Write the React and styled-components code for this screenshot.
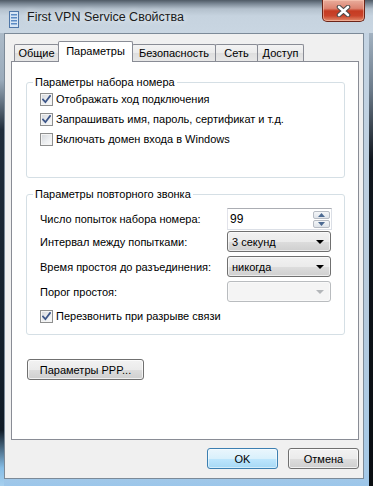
import React from "react"
import styled, { createGlobalStyle } from "styled-components"

const GlobalStyle = createGlobalStyle`
  html, body {
    margin: 0;
    padding: 0;
    width: 373px;
    height: 486px;
    overflow: hidden;
    background: #1b2633;
  }
  body {
    font-family: "Liberation Sans", Arial, sans-serif;
    font-size: 11px;
    color: #000;
  }
`

const Window = styled.div`
  width: 373px;
  height: 486px;
  box-sizing: border-box;
  display: flex;
  flex-direction: column;
  padding: 0 9px 7px 4px;
  background:
    linear-gradient(to bottom, #b9c6d2 0, #9aabbb 80px, #1f2c3a 130px, #0f1a25 430px, #86bde6 468px, #a8d0ee 486px) left top / 4px 100% no-repeat,
    linear-gradient(to bottom, #c2d2e1 0, #6b7a89 90px, #10161d 160px, #0a0e12 486px) right top / 4px 100% no-repeat,
    linear-gradient(to bottom, #bccbd9 0, #c4d4e3 40px, #b6cadc 300px, #a6c9e6 470px, #9cc6ea 486px);
`

const TitleBar = styled.div`
  height: 33px;
  flex: none;
  display: flex;
  align-items: flex-start;
  margin: 0 -9px 0 -4px;
  padding: 0 8px 0 9px;
  background: linear-gradient(to bottom, #4f5a65 0, #7d8a97 4px, #b4c1cd 9px, #c6d3df 16px, #c9d6e2 33px);
`

const TitleIcon = styled.svg`
  margin-top: 11px;
  flex: none;
`

const TitleText = styled.div`
  margin: 10px 0 0 8px;
  font-size: 12.5px;
  line-height: 15px;
  color: #1a1a1a;
  text-shadow: 0 0 6px rgba(255, 255, 255, 0.9);
  flex: 1;
`

const CloseButton = styled.div`
  width: 43px;
  height: 22px;
  box-sizing: border-box;
  border: 1px solid #6b2418;
  border-top: none;
  border-radius: 0 0 5px 5px;
  background: linear-gradient(to bottom, #e9ad9c 0%, #dc8370 40%, #c53b22 52%, #c9432a 75%, #e28c6d 100%);
  box-shadow: inset 0 0 0 1px rgba(255, 210, 190, 0.5);
  display: flex;
  align-items: center;
  justify-content: center;
`

const Client = styled.div`
  flex: 1;
  display: flex;
  flex-direction: column;
  background: #f0f0f0;
  border: 1px solid #7c8a98;
  padding: 7px 4px 9px 6px;
  min-height: 0;
`

const TabStrip = styled.div`
  display: flex;
  align-items: flex-end;
  height: 20px;
  padding-left: 3px;
  flex: none;
`

const Tab = styled.div`
  box-sizing: border-box;
  width: ${p => p.w}px;
  height: ${p => (p.active ? 21 : 17)}px;
  margin-bottom: ${p => (p.active ? -1 : 0)}px;
  margin-left: ${p => (p.first ? 0 : -1)}px;
  position: relative;
  z-index: ${p => (p.active ? 2 : 1)};
  border: 1px solid #898c95;
  border-bottom: none;
  border-radius: 2px 2px 0 0;
  background: ${p => (p.active ? "#fff" : "linear-gradient(to bottom, #f3f3f3 0%, #ebebeb 50%, #dedede 51%, #e7e7e7 100%)")};
  text-align: center;
  line-height: ${p => (p.active ? 18 : 16)}px;
  white-space: nowrap;
`

const Panel = styled.div`
  flex: 1;
  display: flex;
  flex-direction: column;
  align-items: flex-start;
  background: #fff;
  border: 1px solid #898c95;
  padding: 0 13px 0 14px;
  min-height: 0;
`

const Group = styled.fieldset`
  align-self: stretch;
  margin: ${p => p.top}px 0 0 0;
  padding: ${p => p.padTop}px 6px ${p => p.padBottom}px 6px;
  border: 1px solid #d5dfe5;
  border-radius: 3px;
  min-width: 0;
`

const Legend = styled.legend`
  padding: 0 2px;
  line-height: 14px;
`

const CheckRow = styled.label`
  display: flex;
  align-items: center;
  height: 20px;
  padding-left: 7px;
  white-space: nowrap;
`

const Box = styled.span`
  width: 13px;
  height: 13px;
  box-sizing: border-box;
  border: 1px solid #8e8f8f;
  background: linear-gradient(135deg, #d3d6da 0%, #eef0f2 60%, #fbfbfb 100%);
  box-shadow: inset 0 0 0 1px #f4f4f4;
  margin-right: 3px;
  flex: none;
  display: flex;
  align-items: center;
  justify-content: center;
`

const FieldRow = styled.div`
  display: flex;
  align-items: center;
  height: ${p => p.h}px;
  margin-top: ${p => p.mt}px;
  padding-left: ${p => (p.flush ? 0 : 7)}px;
`

const FieldLabel = styled.span`
  width: 187px;
  flex: none;
  white-space: nowrap;
`

const Spin = styled.div`
  width: 105px;
  height: 22px;
  box-sizing: border-box;
  border: 1px solid #dbdfe6;
  border-top-color: #abadb3;
  border-left-color: #e2e3ea;
  background: #fff;
  display: flex;
  align-items: center;
  padding: 0 1px 0 2px;
`

const SpinValue = styled.span`
  flex: 1;
  font-size: 12px;
`

const SpinButtons = styled.div`
  display: flex;
  flex-direction: column;
  gap: 1px;
  width: 17px;
`

const SpinButton = styled.div`
  height: 8px;
  box-sizing: border-box;
  border: 1px solid #b7bcc4;
  border-radius: 2px;
  background: linear-gradient(to bottom, #f4f6f8, #dfe4ea);
  display: flex;
  align-items: center;
  justify-content: center;
`

const Combo = styled.div`
  width: 104px;
  height: 21px;
  box-sizing: border-box;
  border: 1px solid ${p => (p.disabled ? "#b9bcbf" : "#707070")};
  border-radius: 3px;
  background: ${p => (p.disabled
    ? "#f4f4f4"
    : "linear-gradient(to bottom, #f2f2f2 0%, #ebebeb 50%, #dddddd 51%, #cfcfcf 100%)")};
  box-shadow: inset 0 0 0 1px ${p => (p.disabled ? "#f9f9f9" : "rgba(255,255,255,0.6)")};
  display: flex;
  align-items: center;
  padding: 0 6px 0 4px;
`

const ComboText = styled.span`
  flex: 1;
`

const Arrow = styled.span`
  width: 0;
  height: 0;
  border-left: 4px solid transparent;
  border-right: 4px solid transparent;
  border-top: 4px solid ${p => (p.disabled ? "#b3b6b9" : "#000")};
`

const Button = styled.div`
  width: ${p => p.w}px;
  height: 21px;
  box-sizing: border-box;
  border: 1px solid ${p => (p.primary ? "#3c7fb1" : "#707070")};
  border-radius: 3px;
  background: ${p => (p.primary
    ? "linear-gradient(to bottom, #eaf6fd 0%, #d9f0fc 50%, #bee6fd 51%, #a7d9f5 100%)"
    : "linear-gradient(to bottom, #f2f2f2 0%, #ebebeb 50%, #dddddd 51%, #cfcfcf 100%)")};
  box-shadow: inset 0 0 0 1px ${p => (p.primary ? "rgba(255,255,255,0.5)" : "rgba(255,255,255,0.7)")};
  display: flex;
  align-items: center;
  justify-content: center;
  flex: none;
`

const PppButton = styled(Button)`
  margin: 24px 0 0 1px;
`

const Footer = styled.div`
  display: flex;
  justify-content: flex-end;
  gap: 10px;
  margin-top: 8px;
  flex: none;
`

const Check = () => (
  <svg width="9" height="9" viewBox="0 0 9 9">
    <path d="M1 4.6 L3.4 7.2 L8 1" fill="none" stroke="#3d5688" strokeWidth="1.8" strokeLinecap="square" />
  </svg>
)

const CheckBox = ({ checked, children }) => (
  <CheckRow>
    <Box>{checked ? <Check /> : null}</Box>
    {children}
  </CheckRow>
)

const tabs = [
  { label: "Общие", w: 45 },
  { label: "Параметры", w: 75, active: true },
  { label: "Безопасность", w: 84 },
  { label: "Сеть", w: 43 },
  { label: "Доступ", w: 47 },
]

export default function App() {
  return (
    <>
      <GlobalStyle />
      <Window>
        <TitleBar>
          <TitleIcon width="10" height="17" viewBox="0 0 10 17">
            <rect x="0.5" y="0.5" width="9" height="16" fill="#d7e6f5" stroke="#4f77a8" />
            <rect x="2" y="3" width="6" height="1.5" fill="#5c8bc4" />
            <rect x="2" y="6" width="6" height="1.5" fill="#5c8bc4" />
            <rect x="2" y="9" width="6" height="1.5" fill="#5c8bc4" />
            <rect x="2" y="12" width="6" height="1.5" fill="#5c8bc4" />
          </TitleIcon>
          <TitleText>First VPN Service Свойства</TitleText>
          <CloseButton>
            <svg width="15" height="12" viewBox="0 0 15 12">
              <path d="M3 2 L12 10 M12 2 L3 10" stroke="#4a4a4a" strokeWidth="4.6" strokeLinecap="round" />
              <path d="M3 2 L12 10 M12 2 L3 10" stroke="#fff" strokeWidth="2.6" strokeLinecap="round" />
            </svg>
          </CloseButton>
        </TitleBar>
        <Client>
          <TabStrip>
            {tabs.map((t, i) => (
              <Tab key={t.label} w={t.w} active={t.active} first={i === 0}>{t.label}</Tab>
            ))}
          </TabStrip>
          <Panel>
            <Group top={13} padTop={0} padBottom={28}>
              <Legend>Параметры набора номера</Legend>
              <CheckBox checked>Отображать ход подключения</CheckBox>
              <CheckBox checked>Запрашивать имя, пароль, сертификат и т.д.</CheckBox>
              <CheckBox>Включать домен входа в Windows</CheckBox>
            </Group>
            <Group top={9} padTop={7} padBottom={8}>
              <Legend>Параметры повторного звонка</Legend>
              <FieldRow h={22} mt={0}>
                <FieldLabel>Число попыток набора номера:</FieldLabel>
                <Spin>
                  <SpinValue>99</SpinValue>
                  <SpinButtons>
                    <SpinButton>
                      <svg width="7" height="4" viewBox="0 0 7 4"><path d="M0 4 L3.5 0 L7 4 Z" fill="#4c6a92" /></svg>
                    </SpinButton>
                    <SpinButton>
                      <svg width="7" height="4" viewBox="0 0 7 4"><path d="M0 0 L3.5 4 L7 0 Z" fill="#4c6a92" /></svg>
                    </SpinButton>
                  </SpinButtons>
                </Spin>
              </FieldRow>
              <FieldRow h={21} mt={1}>
                <FieldLabel>Интервал между попытками:</FieldLabel>
                <Combo>
                  <ComboText>3 секунд</ComboText>
                  <Arrow />
                </Combo>
              </FieldRow>
              <FieldRow h={21} mt={4}>
                <FieldLabel>Время простоя до разъединения:</FieldLabel>
                <Combo>
                  <ComboText>никогда</ComboText>
                  <Arrow />
                </Combo>
              </FieldRow>
              <FieldRow h={21} mt={4}>
                <FieldLabel>Порог простоя:</FieldLabel>
                <Combo disabled>
                  <ComboText />
                  <Arrow disabled />
                </Combo>
              </FieldRow>
              <FieldRow h={20} mt={4} flush>
                <CheckBox checked>Перезвонить при разрыве связи</CheckBox>
              </FieldRow>
            </Group>
            <PppButton w={117}>Параметры PPP...</PppButton>
          </Panel>
          <Footer>
            <Button w={71} primary>OK</Button>
            <Button w={71}>Отмена</Button>
          </Footer>
        </Client>
      </Window>
    </>
  )
}
